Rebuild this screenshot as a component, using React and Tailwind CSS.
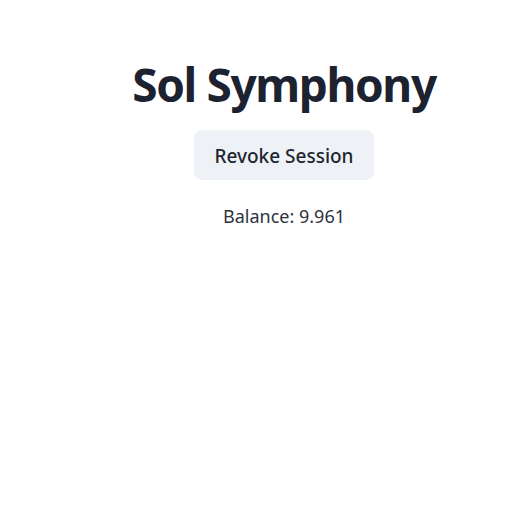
import React from 'react';

const App = () => {
    return (
        <div className="min-h-[528px] bg-white pl-[46px] pt-[61px]" style={{ fontFamily: '"Noto Sans", "Open Sans", sans-serif' }}>
            <div className="flex flex-col items-center">
                {/* Title */}
                <h1 className="text-[46px] font-bold text-[#1c2230] leading-none tracking-[-0.03em]">Sol Symphony</h1>

                {/* Session */}
                <button className="mt-[23px] h-[50px] px-5 pt-[2px] rounded-lg bg-[#eef2f6] text-[19px] font-medium text-[#1f2530]">
                    Revoke Session
                </button>

                <p className="mt-[22px] text-lg text-[#2d333d]">Balance: 9.961</p>
            </div>
        </div>
    );
};

export default App;
